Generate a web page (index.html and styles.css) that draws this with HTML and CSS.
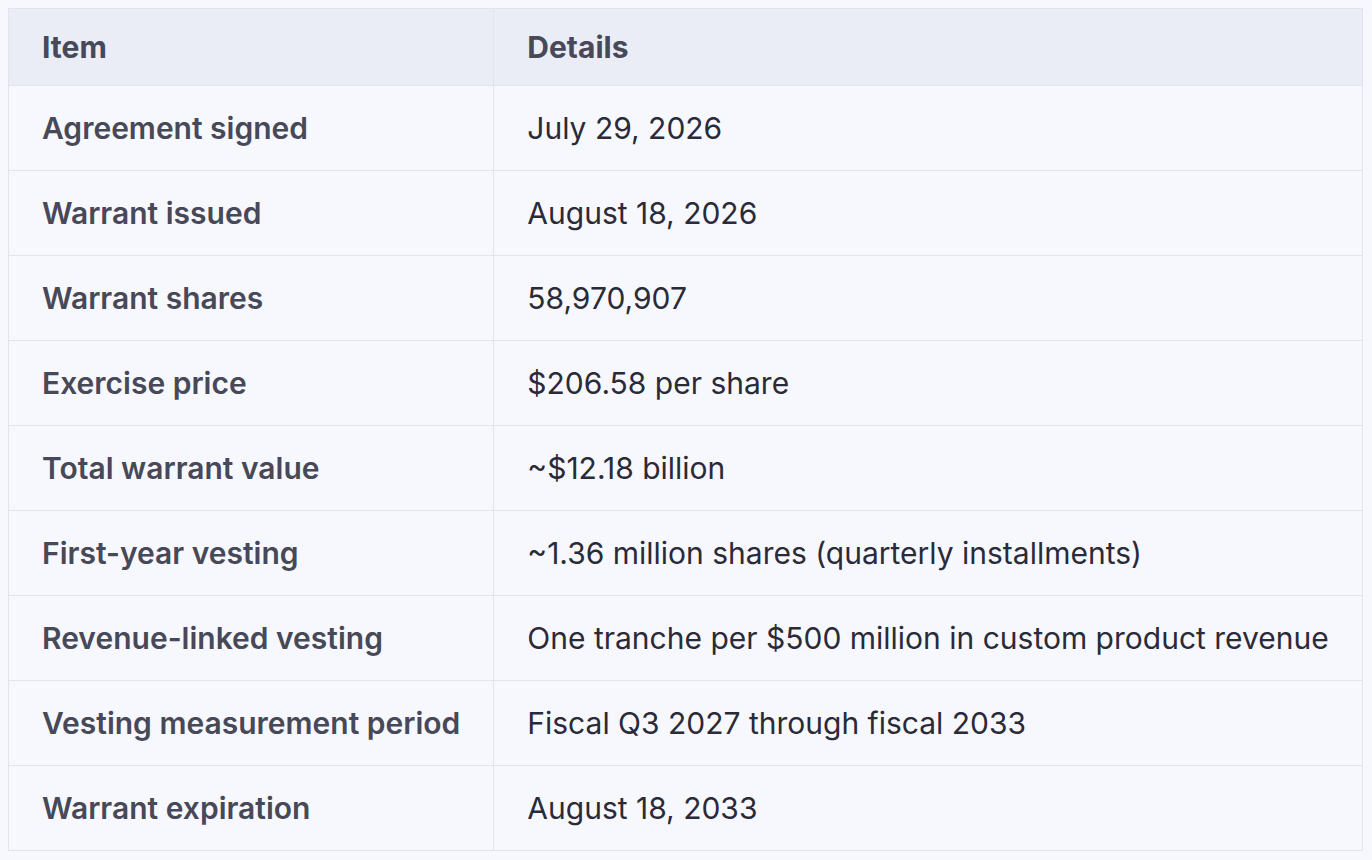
FILE: index.html
```html
<!DOCTYPE html>
<html lang="en">
<head>
<meta charset="utf-8">
<title>Warrant terms</title>
<link rel="stylesheet" href="styles.css">
</head>
<body>
<table class="terms">
  <thead>
    <tr><th>Item</th><th>Details</th></tr>
  </thead>
  <tbody>
    <tr><td class="item">Agreement signed</td><td>July 29, 2026</td></tr>
    <tr><td class="item">Warrant issued</td><td>August 18, 2026</td></tr>
    <tr><td class="item">Warrant shares</td><td>58,970,907</td></tr>
    <tr><td class="item">Exercise price</td><td>$206.58 per share</td></tr>
    <tr><td class="item">Total warrant value</td><td>~$12.18 billion</td></tr>
    <tr><td class="item">First-year vesting</td><td>~1.36 million shares (quarterly installments)</td></tr>
    <tr><td class="item">Revenue-linked vesting</td><td>One tranche per $500 million in custom product revenue</td></tr>
    <tr><td class="item">Vesting measurement period</td><td>Fiscal Q3 2027 through fiscal 2033</td></tr>
    <tr><td class="item">Warrant expiration</td><td>August 18, 2033</td></tr>
  </tbody>
</table>
</body>
</html>
```
FILE: styles.css
```css
html, body {
  background: #f7f8fd;
}
body {
  margin: 8px;
  font-family: Inter, "Noto Sans", sans-serif;
  font-size: 30px;
  color: #2a2a38;
}
.terms {
  border-collapse: collapse;
  border: 1px solid #e1e3ef;
}
.terms th,
.terms td {
  text-align: left;
  border: 1px solid #e1e3ef;
  padding: 20px 33px;
  line-height: 44px;
}
.terms th {
  background: #eaecf6;
  font-weight: 700;
  color: #474858;
  padding-top: 16px;
  padding-bottom: 16px;
}
.terms td.item {
  font-weight: 600;
  color: #474858;
}
```
